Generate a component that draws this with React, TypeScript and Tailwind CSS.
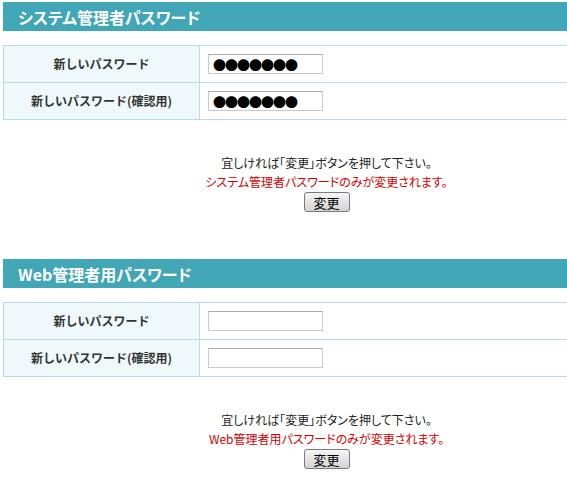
import React from 'react';

const FONT = { fontFamily: '"MS PGothic", "Noto Sans CJK JP", sans-serif' };

function PasswordTable({ filled }: { filled: boolean }) {
  const rows = ['新しいパスワード', '新しいパスワード(確認用)'];
  return (
    <div className="ml-[3px] border-t border-l border-[#b7dce3]">
      {rows.map((label) => (
        <div key={label} className="flex h-[37px] border-b border-[#b7dce3]">
          <div className="flex w-[196px] items-center justify-center border-r border-[#b7dce3] bg-[#eff8fa] text-[12px] font-bold text-[#333]">
            {label}
          </div>
          <div className="flex items-center pl-[8px]">
            <div className="flex h-[20px] w-[115px] items-center border border-[#c9c9d0] border-t-[#a9a9b0] bg-white pl-[4px] text-[13px] leading-none tracking-[-1px] text-black">
              {filled ? '●●●●●●●' : ''}
            </div>
          </div>
        </div>
      ))}
    </div>
  );
}

function Section({ title, target, filled }: { title: string; target: string; filled: boolean }) {
  return (
    <div>
      <div className="ml-[3px] flex h-[29px] items-center bg-[#41a6b6] pl-[15px] text-[16px] font-bold text-white [font-feature-settings:'palt']">
        {title}
      </div>
      <div className="mt-[14px]">
        <PasswordTable filled={filled} />
      </div>
      <div className="mt-[33px] flex flex-col items-center pl-[86px] text-[12px] leading-[19px] [font-feature-settings:'palt']">
        <p className="text-[#222]">宜しければ「変更」ボタンを押して下さい。</p>
        <p className="text-[#d40000]">{target}パスワードのみが変更されます。</p>
        <button className="mt-[1px] h-[20px] w-[46px] rounded-[3px] border border-[#7a7a7a] bg-gradient-to-b from-[#f6f6f6] to-[#d2d2d2] text-[13px] leading-none text-black">
          変更
        </button>
      </div>
    </div>
  );
}

export default function App() {
  return (
    <div className="h-[477px] w-[567px] overflow-hidden bg-white pt-[2px]" style={FONT}>
      <Section title="システム管理者パスワード" target="システム管理者" filled />
      <div className="mt-[47px]">
        <Section title="Web管理者用パスワード" target="Web管理者用" filled={false} />
      </div>
    </div>
  );
}
